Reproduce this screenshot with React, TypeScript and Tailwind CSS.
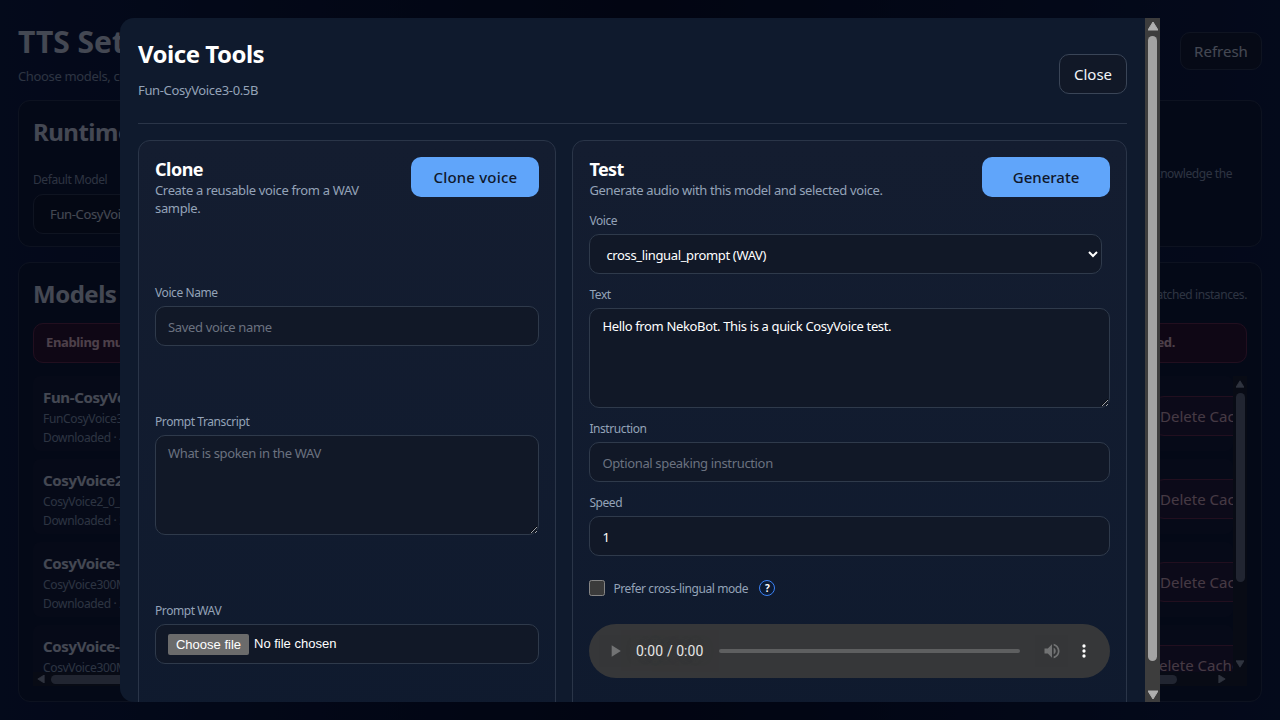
import React from 'react';

const models = [
  { name: 'Fun-CosyVoice3-0.5B', repo: 'FunCosyVoice3-0.5B-2512', status: 'Downloaded · 4.2 GB', shift: false },
  { name: 'CosyVoice2-0.5B', repo: 'CosyVoice2_0_5B', status: 'Downloaded · 3.9 GB', shift: false },
  { name: 'CosyVoice-300M', repo: 'CosyVoice300M', status: 'Downloaded · 2.1 GB', shift: false },
  { name: 'CosyVoice-300M-SFT', repo: 'CosyVoice300M-SFT', status: 'Downloaded · 2.1 GB', shift: true },
];

const Arrow: React.FC<{ dir: 'up' | 'down' | 'left' | 'right'; className?: string }> = ({ dir, className }) => {
  const points = {
    up: '5,1 10,9 0,9',
    down: '0,1 10,1 5,9',
    left: '9,0 9,10 1,5',
    right: '1,0 1,10 9,5',
  }[dir];
  return (
    <svg viewBox="0 0 10 10" className={className}>
      <polygon points={points} fill="currentColor" stroke="currentColor" strokeLinejoin="round" />
    </svg>
  );
};

const Field: React.FC<{ label: string; children: React.ReactNode }> = ({ label, children }) => (
  <div>
    <label className="block text-xs leading-[18px] tracking-[-0.42px] text-[#94a3b8] mb-1">{label}</label>
    {children}
  </div>
);

const inputClass =
  'block w-full h-10 px-3 pt-0.5 rounded-[10px] border border-[#2f3a4b] bg-[#111827] text-[13px] text-white placeholder:text-[#6b7280] outline-none';
const textareaClass =
  'block w-full h-[100px] px-3 py-2 rounded-[10px] border border-[#2f3a4b] bg-[#111827] text-[13px] leading-[18px] text-white placeholder:text-[#6b7280] outline-none';

export default function App() {
  return (
    <div className="relative h-[720px] w-[1280px] overflow-hidden font-['Noto_Sans',sans-serif] tracking-[-0.35px] bg-gradient-to-r from-[#0b1838] via-[#040819] to-[#0b1838] text-[#e2e8f0] [color-scheme:dark]">
      {/* settings page behind the dialog */}
      <div className="flex flex-col gap-[15px] px-[18px] pt-[18px]">
        <div className="flex justify-between h-[67px]">
          <div>
            <h1 className="text-3xl leading-[48px] font-bold tracking-normal">TTS Settings</h1>
            <p className="text-[13px] leading-5 text-[#94a3b8]">Choose models, configure the runtime and manage cached downloads.</p>
          </div>
          <button className="w-[82px] h-[38px] mt-3.5 rounded-[10px] border border-[#2f3a4b] bg-[#111827] text-[15px] tracking-normal">Refresh</button>
        </div>

        <section className="h-[147px] rounded-xl border border-[#2a3548] bg-[#0d1428] px-[14px] pt-[15px] flex justify-between">
          <div>
            <h2 className="text-2xl leading-8 font-bold tracking-[-0.5px]">Runtime</h2>
            <label className="block mt-6 text-xs leading-4 tracking-[-0.42px] text-[#94a3b8]">Default Model</label>
            <div className="mt-1.5 w-[400px] h-10 px-4 pt-0.5 flex items-center rounded-[10px] border border-[#2f3a4b] bg-[#0b1120] text-[13px]">Fun-CosyVoice3-0.5B</div>
          </div>
          <p className="text-xs leading-5 tracking-[-0.42px] text-[#94a3b8] mt-[48px] mr-[15px]">you must acknowledge the</p>
        </section>

        <section className="h-[440px] rounded-xl border border-[#2a3548] bg-[#0d1428] px-[14px] pt-4">
          <div className="flex justify-between items-center h-8">
            <h2 className="text-2xl leading-8 font-bold tracking-[-0.5px] -mt-0.5">Models</h2>
            <p className="text-xs tracking-[-0.42px] text-[#94a3b8]">Deleting the cache also unloads any matched instances.</p>
          </div>
          <div className="mt-[12px] h-10 rounded-[10px] border border-[#6f2a45] bg-[#2f1024] px-3 flex items-center justify-between text-[13px] font-bold text-[#fecdd3]">
            <span>Enabling multiple models can exhaust GPU memory.</span>
            <span className="mr-[59px]">Only one at a time is recommended.</span>
          </div>

          <div className="mt-[13px] h-[310px] flex flex-col">
            <div className="flex flex-1 min-h-0">
              <div className="flex-1 min-w-0 overflow-hidden flex flex-col gap-2">
                {models.map((m) => (
                  <div key={m.name} className="h-[75px] shrink-0 flex justify-between rounded-lg bg-[#121a2e] pl-2.5 pt-[11px]">
                    <div>
                      <div className="text-[15px] leading-5 font-bold">{m.name}</div>
                      <div className="text-xs leading-[19px] mt-0.5 text-[#94a3b8]">{m.repo}</div>
                      <div className="text-xs leading-[19px] text-[#94a3b8]">{m.status}</div>
                    </div>
                    <button
                      className={`shrink-0 w-[110px] h-10 mt-[9px] rounded-[10px] border border-[#6f2a45] bg-[#26182f] text-[15px] tracking-normal text-[#e5b8c0] text-left pl-[5px] ${m.shift ? '-mr-[19px]' : '-mr-[31px]'}`}
                    >
                      Delete Cache
                    </button>
                  </div>
                ))}
              </div>
              <div className="w-3.5 shrink-0 flex flex-col items-center bg-[#1a1c22] text-[#9ca3af]">
                <Arrow dir="up" className="w-2 h-2 mt-1 mb-[5px]" />
                <div className="w-[9px] h-[189px] rounded-full bg-[#6b7280]" />
                <div className="flex-1" />
                <Arrow dir="down" className="w-2 h-2 mb-1" />
              </div>
            </div>
            <div className="h-3.5 shrink-0 flex items-center bg-[#1a1c22] text-[#9ca3af] pl-1">
              <Arrow dir="left" className="w-2 h-2" />
              <div className="ml-1.5 w-[1126px] h-[9px] rounded-full bg-[#6b7280]" />
              <div className="flex-1" />
              <Arrow dir="right" className="w-2 h-2 mr-[21px]" />
            </div>
          </div>
        </section>
      </div>

      {/* dim layer + dialog */}
      <div className="absolute inset-0 bg-[#01040f]/70 flex items-center justify-center">
        <div className="relative w-[1040px] h-[684px] flex overflow-hidden rounded-l-[14px] bg-[#0f1a2d]">
          <div className="flex-1 min-w-0 pt-5 pl-[18px] pr-[18px]">
            <div className="h-[86px] flex justify-between items-start border-b border-[#2a3548]">
              <div>
                <h2 className="text-2xl leading-8 font-bold tracking-[-0.5px] text-white">Voice Tools</h2>
                <p className="mt-[11px] text-[13px] leading-[18px] text-[#94a3b8]">Fun-CosyVoice3-0.5B</p>
              </div>
              <button className="w-[68px] h-10 mt-4 rounded-[10px] border border-[#3a4557] bg-[#111827] text-[15px] tracking-normal text-[#f1f5f9]">Close</button>
            </div>

            <div className="mt-4 flex gap-4 h-[600px]">
              {/* clone */}
              <section className="w-[418.4px] shrink-0 rounded-xl border border-[#2a3548] bg-gradient-to-b from-[#141d30] to-[#0f1a2e] p-4 flex flex-col gap-[67px]">
                <div className="flex justify-between items-start h-[60px]">
                  <div className="w-[240px]">
                    <h3 className="text-lg leading-6 font-bold tracking-[-0.5px] text-white">Clone</h3>
                    <p className="text-[13px] leading-[18px] text-[#94a3b8]">Create a reusable voice from a WAV sample.</p>
                  </div>
                  <button className="w-[128px] h-10 rounded-[10px] bg-[#60a5fa] text-[15px] font-medium tracking-[0.2px] text-[#0f172a]">Clone voice</button>
                </div>
                <Field label="Voice Name">
                  <input className={inputClass} placeholder="Saved voice name" />
                </Field>
                <Field label="Prompt Transcript">
                  <textarea className={textareaClass} placeholder="What is spoken in the WAV" />
                </Field>
                <Field label="Prompt WAV">
                  <label className="flex items-center w-full h-10 px-3 rounded-[10px] border border-[#2f3a4b] bg-[#111827] text-[13px] tracking-normal text-white font-['Liberation_Sans',Arial,sans-serif]">
                    <input type="file" className="sr-only" />
                    <span className="w-[81px] h-[21px] mr-[5px] rounded-[2px] bg-[#6b6b6b] leading-[21px] text-center">Choose file</span>
                    <span>No file chosen</span>
                  </label>
                </Field>
              </section>

              {/* test */}
              <section className="flex-1 min-w-0 rounded-xl border border-[#2a3548] bg-gradient-to-b from-[#141d30] to-[#0f1a2e] p-4">
                <div className="flex justify-between items-start h-10">
                  <div>
                    <h3 className="text-lg leading-6 font-bold tracking-[-0.6px] text-white">Test</h3>
                    <p className="text-[13px] leading-[18px] text-[#94a3b8]">Generate audio with this model and selected voice.</p>
                  </div>
                  <button className="w-[128px] h-10 rounded-[10px] bg-[#60a5fa] text-[15px] font-medium tracking-normal text-[#0f172a]">Generate</button>
                </div>
                <div className="mt-[15px] flex flex-col gap-3">
                  <Field label="Voice">
                    <select className="block w-[513px] h-10 px-3 pt-0.5 rounded-[10px] border border-[#2f3a4b] bg-[#111827] text-[13px] text-white outline-none">
                      <option>cross_lingual_prompt (WAV)</option>
                    </select>
                  </Field>
                  <Field label="Text">
                    <textarea className={textareaClass} defaultValue="Hello from NekoBot. This is a quick CosyVoice test." />
                  </Field>
                  <Field label="Instruction">
                    <input className={inputClass} placeholder="Optional speaking instruction" />
                  </Field>
                  <Field label="Speed">
                    <input className={inputClass} defaultValue="1" />
                  </Field>
                </div>
                <div className="mt-6 h-4 flex items-center">
                  <input type="checkbox" className="w-4 h-4 m-0" />
                  <span className="ml-2 pt-px text-xs tracking-[-0.4px] text-[#94a3b8]">Prefer cross-lingual mode</span>
                  <span className="ml-[11px] w-4 h-4 rounded-full border border-[#3b82f6] bg-[#0b1a33] flex items-center justify-center text-[10px] font-bold text-white">?</span>
                </div>
                <audio controls className="block w-full h-[54px] mt-7 tracking-normal" />
              </section>
            </div>
          </div>

          {/* dialog scrollbar */}
          <div className="w-[15px] shrink-0 flex flex-col items-center bg-[#3d3d3d] text-[#b0b0b0]">
            <Arrow dir="up" className="w-2.5 h-2.5 mt-[3px] mb-[5px]" />
            <div className="w-[9px] h-[625px] rounded-full bg-[#a3a3a3]" />
            <div className="flex-1" />
            <Arrow dir="down" className="w-2.5 h-2.5 mb-0.5" />
          </div>
        </div>
      </div>
    </div>
  );
}
